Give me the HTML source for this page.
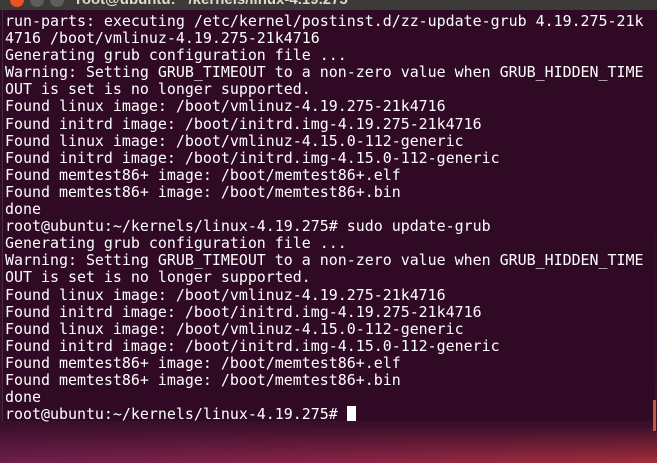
<!DOCTYPE html>
<html><head><style>
html,body{margin:0;padding:0;width:657px;height:463px;overflow:hidden;background:linear-gradient(90deg,#6e1f4c,#8a2446 50%,#a22e3a);}
#wall{position:absolute;left:0;top:0;width:657px;height:463px;background:linear-gradient(180deg,#2a0c22 0px,#3a0f2a 425px,rgba(120,30,70,0) 463px);}
#title{position:absolute;left:0;top:0;width:657px;height:10px;background:#3c3b37;overflow:hidden;}
#title span{position:absolute;left:76px;top:-9px;font:bold 15px "Liberation Sans",sans-serif;color:#dfdbd2;}
.btn{position:absolute;top:-7px;width:14px;height:14px;border-radius:50%;background:#5f5e5a;}
#term{position:absolute;left:2px;top:10px;width:652px;height:411px;background:#300a24;border-left:1px solid #4a2a3e;}
pre{margin:0;position:absolute;left:2px;top:3px;font:14.95px/17.1px "DejaVu Sans Mono","Liberation Mono",monospace;color:#ffffff;}
#cur{display:inline-block;width:9px;height:15px;background:#fff;vertical-align:-2px;}
#sb{position:absolute;left:650px;top:390px;width:3px;height:31px;background:#c05a3a;}
</style></head><body>
<div id="wall"></div>
<div id="title"><div class="btn" style="left:10px;background:#e95420"></div><div class="btn" style="left:30px"></div><div class="btn" style="left:50px"></div><span>root@ubuntu: ~/kernels/linux-4.19.275</span></div>
<div id="term"><pre>run-parts: executing /etc/kernel/postinst.d/zz-update-grub 4.19.275-21k
4716 /boot/vmlinuz-4.19.275-21k4716
Generating grub configuration file ...
Warning: Setting GRUB_TIMEOUT to a non-zero value when GRUB_HIDDEN_TIME
OUT is set is no longer supported.
Found linux image: /boot/vmlinuz-4.19.275-21k4716
Found initrd image: /boot/initrd.img-4.19.275-21k4716
Found linux image: /boot/vmlinuz-4.15.0-112-generic
Found initrd image: /boot/initrd.img-4.15.0-112-generic
Found memtest86+ image: /boot/memtest86+.elf
Found memtest86+ image: /boot/memtest86+.bin
done
root@ubuntu:~/kernels/linux-4.19.275# sudo update-grub
Generating grub configuration file ...
Warning: Setting GRUB_TIMEOUT to a non-zero value when GRUB_HIDDEN_TIME
OUT is set is no longer supported.
Found linux image: /boot/vmlinuz-4.19.275-21k4716
Found initrd image: /boot/initrd.img-4.19.275-21k4716
Found linux image: /boot/vmlinuz-4.15.0-112-generic
Found initrd image: /boot/initrd.img-4.15.0-112-generic
Found memtest86+ image: /boot/memtest86+.elf
Found memtest86+ image: /boot/memtest86+.bin
done
root@ubuntu:~/kernels/linux-4.19.275# <span id="cur"></span></pre><div id="sb"></div></div>
</body></html>
